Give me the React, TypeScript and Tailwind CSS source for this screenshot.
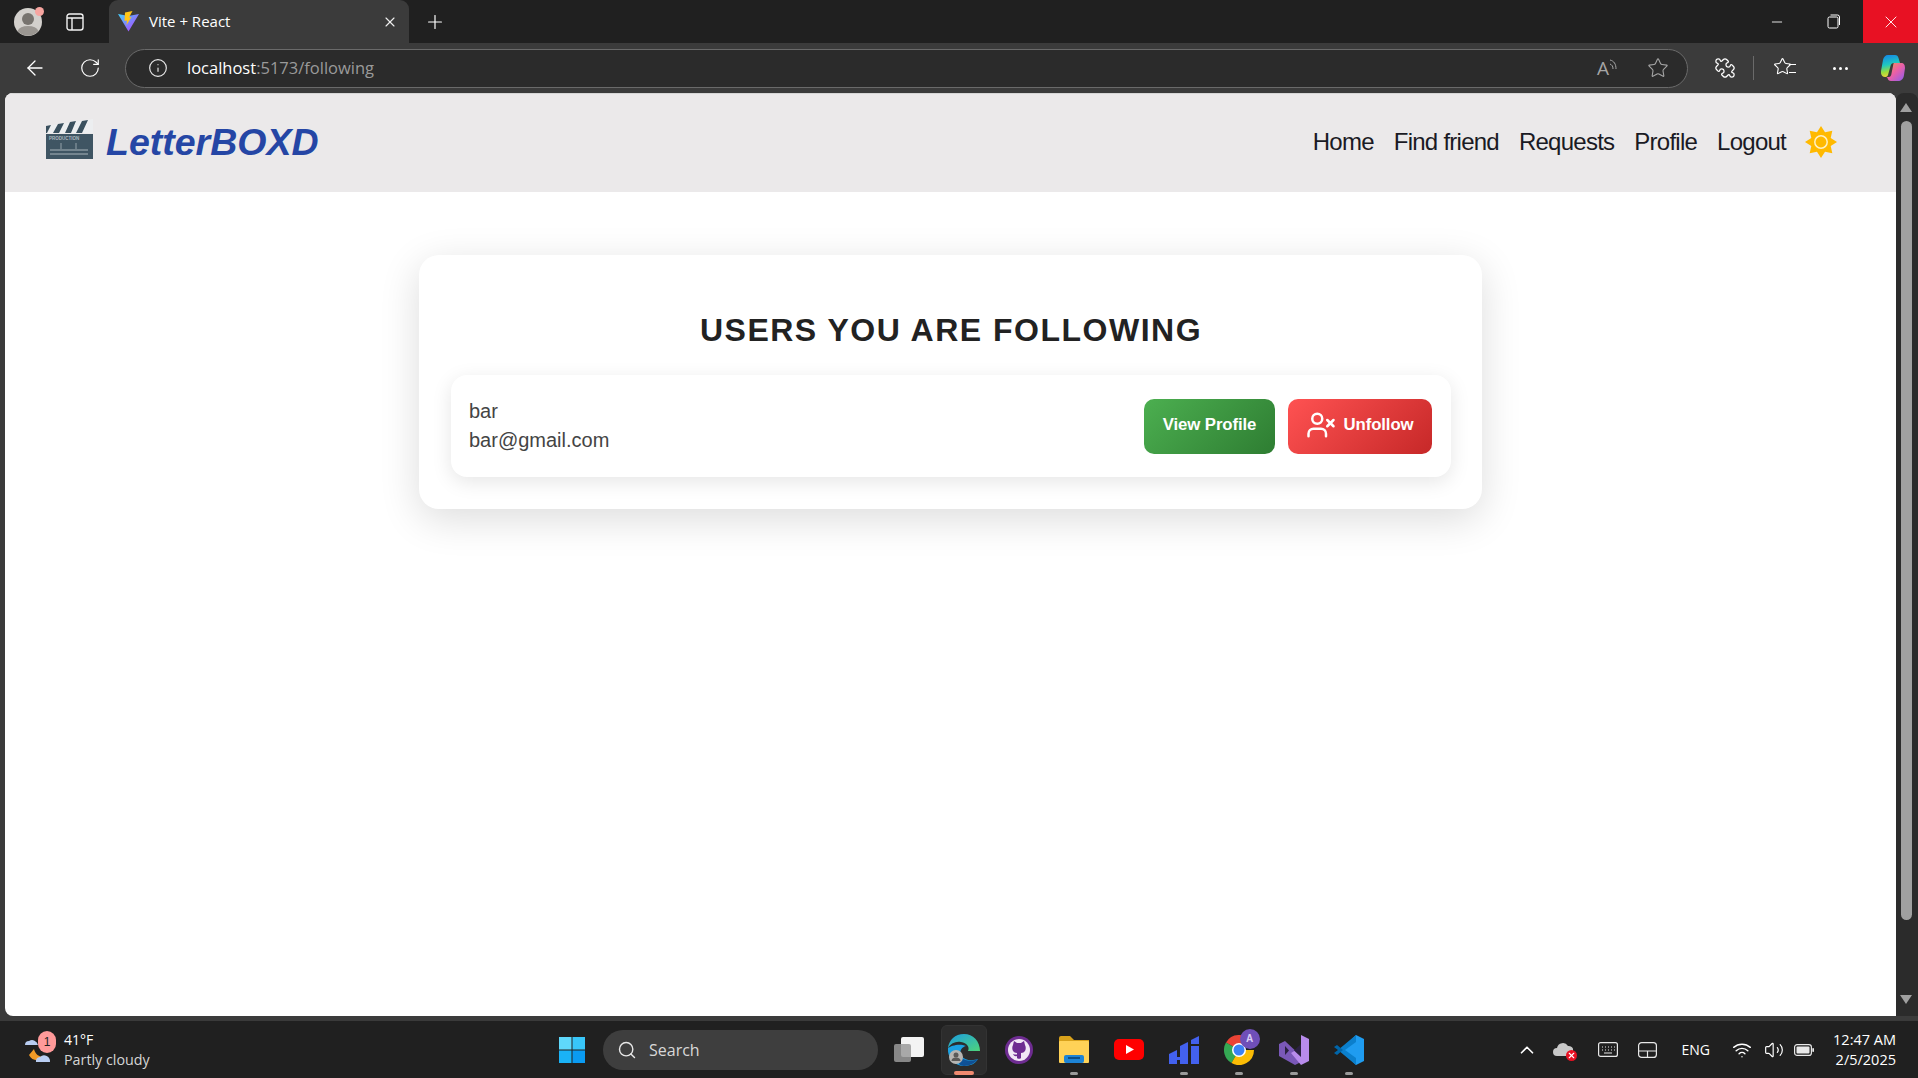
import React from 'react';
import {
  ArrowLeft,
  RotateCw,
  Info,
  Star,
  Puzzle,
  X,
  Plus,
  Minus,
  Search,
  ChevronUp,
  Wifi,
  Volume2,
  UserX,
} from 'lucide-react';

const sans = 'font-["Liberation_Sans",Arial,sans-serif]';

const Avatar: React.FC = () => (
  <svg width="28" height="28" viewBox="0 0 28 28">
    <circle cx="14" cy="14" r="14" fill="#d3d0cc" />
    <circle cx="14" cy="11" r="6" fill="#77736e" />
    <path d="M3.500 23a11 7 0 0 1 21 0a14 14 0 0 1-21 0z" fill="#9a9691" />
  </svg>
);

const ViteLogo: React.FC = () => (
  <svg width="21" height="21" viewBox="0 0 21 21">
    <defs>
      <linearGradient id="vite" x1="0" y1="0" x2="1" y2="1">
        <stop offset="0" stopColor="#41d1ff" />
        <stop offset="1" stopColor="#bd34fe" />
      </linearGradient>
    </defs>
    <path d="M0 3l10.500 17.500L21 3 10.500 5z" fill="url(#vite)" />
    <path d="M14.500 0L7 1.500 6.500 10l2.500-.5-.5 4.500 5-8-2.500.5z" fill="#ffc517" />
  </svg>
);

const Clapper: React.FC = () => (
  <svg width="48" height="40" viewBox="0 0 48 40">
    <path d="M1 7L48 0v14H1z" fill="#eceef0" />
    <path d="M1 7l5-1-4 8H1zM13 5l6-1-5 10H8zM25 3l6-1-5 12h-6zM37 2l6-1-6 13h-6z" fill="#3a505e" />
    <rect x="1" y="15" width="47" height="25" fill="#3f5563" />
    <text x="4" y="21" fontSize="4.500" fontWeight="700" fill="#aeb9c0" fontFamily="Liberation Sans, sans-serif">PRODUCTION</text>
    <path d="M16 24v6M31 24v6" stroke="#a9b5bc" strokeWidth="0.800" />
    <path d="M5 31h38M5 35h38" stroke="#a9b5bc" strokeWidth="1.100" />
  </svg>
);

const sunPoints = Array.from({ length: 16 }, (_, i) => {
  const r = i % 2 === 0 ? 16 : 10.5;
  const a = (i * Math.PI) / 8 - Math.PI / 2;
  return `${(16 + r * Math.cos(a)).toFixed(2)},${(16 + r * Math.sin(a)).toFixed(2)}`;
}).join(' ');

const Sun: React.FC = () => (
  <svg width="32" height="32" viewBox="0 0 32 32" className="-ml-[1px]">
    <polygon points={sunPoints} fill="#ffb900" />
    <circle cx="16" cy="16" r="6.200" fill="#ffb900" stroke="#fff1c4" strokeWidth="1.500" />
  </svg>
);

const Copilot: React.FC = () => (
  <svg width="24" height="26" viewBox="0 0 24 26">
    <defs>
      <linearGradient id="cpa" x1="0.200" y1="0" x2="0.400" y2="1">
        <stop offset="0" stopColor="#1487e8" />
        <stop offset="0.45" stopColor="#1fc8c0" />
        <stop offset="0.75" stopColor="#9bdc3c" />
        <stop offset="1" stopColor="#f4cf3a" />
      </linearGradient>
      <linearGradient id="cpb" x1="0" y1="0" x2="1" y2="1">
        <stop offset="0" stopColor="#f59a4a" />
        <stop offset="0.5" stopColor="#ea5fa8" />
        <stop offset="1" stopColor="#8a5cf0" />
      </linearGradient>
    </defs>
    <path d="M7 0h7c2 0 3 1 3.500 3L19 8h-6c-2 0-3 1-3.500 3L7 20c-.5 1.500-1.500 2-3 2-3 0-4.500-3-4-6L2 5c.5-3 2.500-5 5-5z" fill="url(#cpa)" />
    <path d="M13 8h7c3 0 4 2 4 5l-1 7c-.5 4-3 6-6 6h-7c-2 0-3-1-3.500-3L5.500 22H8c1 0 2-1 2.300-2.500L12 11c.2-1.500.5-3 1-3z" fill="url(#cpb)" />
  </svg>
);

const Clover: React.FC = () => (
  <svg width="26" height="26" viewBox="0 0 26 26">
    <rect x="0" y="0" width="12.500" height="12.500" fill="#5fd8fb" />
    <rect x="13.500" y="0" width="12.500" height="12.500" fill="#38c6f9" />
    <rect x="0" y="13.500" width="12.500" height="12.500" fill="#1ab2f6" />
    <rect x="13.500" y="13.500" width="12.500" height="12.500" fill="#0a9bf2" />
  </svg>
);

const TaskView: React.FC = () => (
  <svg width="32" height="30" viewBox="0 0 32 30">
    <rect x="8" y="2" width="23" height="20" rx="2" fill="#f3f3f3" />
    <rect x="1" y="9" width="17" height="18" rx="2" fill="#9a9a9a" fillOpacity="0.85" />
  </svg>
);

const Edge: React.FC = () => (
  <svg width="32" height="32" viewBox="0 0 32 32">
    <defs>
      <linearGradient id="edgeb" x1="0" y1="0" x2="1" y2="1">
        <stop offset="0" stopColor="#0c59a4" />
        <stop offset="1" stopColor="#114a8b" />
      </linearGradient>
      <linearGradient id="edgeg" x1="0" y1="0" x2="1" y2="1">
        <stop offset="0" stopColor="#1b9de2" />
        <stop offset="1" stopColor="#4ed47a" />
      </linearGradient>
    </defs>
    <path d="M16 0C7 0 1 6 0 14c3-5 8-7 13-6 6 1 9 5 7 9h12C32 7 25 0 16 0z" fill="url(#edgeg)" />
    <path d="M0 14c-1 9 6 18 16 18 6 0 11-2 14-7-5 2-14 2-17-4-2-4 1-8 5-9-7-3-15 0-18 2z" fill="#1ba1e2" />
    <path d="M12 21c2 6 11 7 18 4-3 4-8 7-14 7-2 0-4-1-5-2z" fill="url(#edgeb)" />
    <circle cx="8" cy="23" r="7" fill="#b7b5b2" />
    <circle cx="8" cy="21" r="2.500" fill="#5c5a58" />
    <path d="M3.500 27a4.500 3.500 0 0 1 9 0z" fill="#5c5a58" />
  </svg>
);

const GitHub: React.FC = () => (
  <svg width="28" height="28" viewBox="0 0 28 28">
    <circle cx="14" cy="14" r="14" fill="#6e2c91" />
    <circle cx="14" cy="14" r="11" fill="#f1e7f5" />
    <path d="M9 5l3 2h4l3-2 1 4c1 2 1 4 0 6-1 1-2 2-4 2v5c0 1-4 1-4 0v-2c-2 .5-3 0-4-2 1 .5 2 .5 4 .5V17c-2 0-3-1-4-2-1-2-1-4 0-6z" fill="#6e2c91" />
  </svg>
);

const Folder: React.FC = () => (
  <svg width="30" height="27" viewBox="0 0 30 27">
    <path d="M0 2a2 2 0 0 1 2-2h9l4 4h15v6H0z" fill="#d9a21b" />
    <rect x="0" y="5" width="30" height="22" rx="1" fill="#ffd257" />
    <rect x="5" y="19" width="20" height="8" rx="2" fill="#1d84d6" />
    <rect x="9" y="21" width="12" height="2" fill="#0b4f8a" />
  </svg>
);

const YouTube: React.FC = () => (
  <svg width="30" height="21" viewBox="0 0 30 21">
    <rect width="30" height="21" rx="5" fill="#ff0000" />
    <path d="M12 6l8 4.500-8 4.500z" fill="#fff" />
  </svg>
);

const Bars: React.FC = () => (
  <svg width="30" height="28" viewBox="0 0 30 28">
    <path d="M0 18l8-4v14H0zM8 21h3v3H8zM11 10l8-4v22h-8zM22 4l8-4v8h-8zM22 10h8v18h-8z" fill="#4361ee" />
  </svg>
);

const Chrome: React.FC = () => (
  <div className="relative w-[30px] h-[30px]">
    <svg width="30" height="30" viewBox="0 0 30 30">
      <path d="M15 15L2 7.500A15 15 0 0 1 28 7.500z" fill="#ea4335" />
      <path d="M15 15l-7.500 13A15 15 0 0 1 2 7.500z" fill="#34a853" />
      <path d="M15 15h15A15 15 0 0 1 7.500 28z" fill="#fbbc05" />
      <circle cx="15" cy="15" r="7" fill="#fff" />
      <circle cx="15" cy="15" r="5.500" fill="#3b82f6" />
    </svg>
    <div className={`absolute -top-[6px] -right-[6px] w-[20px] h-[20px] rounded-full bg-[#6f4fb8] flex items-center justify-center text-[10px] font-bold text-[#d9cdf5] ${sans}`}>
      A
    </div>
  </div>
);

const VisualStudio: React.FC = () => (
  <svg width="30" height="30" viewBox="0 0 30 30">
    <path d="M0 9l6-3 16 15 0 6-6 3L0 21z" fill="#7a58b8" />
    <path d="M22 0l8 4v22l-8 4-10-12 10-6z" fill="#b88bec" />
    <path d="M6 11v9l4-4.500z" fill="#2a2140" />
    <path d="M22 9v13l-7-6.500z" fill="#2a2140" />
  </svg>
);

const VSCode: React.FC = () => (
  <svg width="30" height="30" viewBox="0 0 30 30">
    <path d="M22 0l8 4v22l-8 4L6 15z" fill="#1f9cf0" />
    <path d="M22 0L4 15l18 15v-7L11 15 22 7z" fill="#0b7fcc" />
    <path d="M3 10l-3 2 4 3-4 3 3 2 6-5z" fill="#0065a9" />
  </svg>
);

const Weather: React.FC = () => (
  <div className="relative w-[32px] h-[34px]">
    <svg width="32" height="34" viewBox="0 0 32 34">
      <path d="M5 22c3 6 10 7 15 2-5 0-9-3-10-8z" fill="#f19a26" />
      <path d="M1 12a4 4 0 0 1 4-4 6 6 0 0 1 9 4z" fill="#b9cdf2" />
      <path d="M12 29a4 4 0 0 1 4-5 6 6 0 0 1 10 5z" fill="#b9cdf2" />
    </svg>
    <div className={`absolute -top-[2px] left-[14px] w-[18px] h-[22px] rounded-full bg-[#ff9a9a] flex items-center justify-center text-[12px] text-[#222] ${sans}`}>
      1
    </div>
  </div>
);

const TaskItem: React.FC<{ dot?: boolean; children: React.ReactNode }> = ({ dot, children }) => (
  <div className="relative w-[55px] h-[50px] flex items-center justify-center">
    {children}
    {dot && <span className="absolute bottom-0 left-1/2 -translate-x-1/2 w-[8px] h-[3px] rounded-full bg-[#9a9a9a]" />}
  </div>
);

const NavLink: React.FC<{ label: string }> = ({ label }) => (
  <a className="text-[24px] tracking-[-0.75px] text-[#1a1a24]">{label}</a>
);

export default function App() {
  return (
    <div className={`w-[1918px] h-[1078px] overflow-hidden flex flex-col bg-[#3b3b3b] ${sans}`}>
      {/* tab strip */}
      <div className="h-[43px] bg-[#202020] flex items-center font-['Open_Sans',sans-serif] text-white">
        <div className="w-[56px] pl-[14px] flex items-center relative">
          <Avatar />
          <span className="absolute left-[35px] -top-[1px] w-[9px] h-[9px] rounded-full bg-[#f7a5a0]" />
        </div>
        <div className="w-[53px] pl-[10px]">
          <svg width="18" height="18" viewBox="0 0 18 18" fill="none" stroke="#f2f2f2" strokeWidth="1.400">
            <rect x="1" y="1" width="16" height="16" rx="2.500" />
            <path d="M1 5h16M6 5v12" />
          </svg>
        </div>
        <div className="w-[300px] h-full bg-[#3b3b3b] rounded-t-[9px] flex items-center pl-[9px] pr-[11px]">
          <ViteLogo />
          <span className="ml-[10px] text-[15px] leading-none">Vite + React</span>
          <X size={16} strokeWidth={1.700} className="ml-auto text-[#f0f0f0]" />
        </div>
        <Plus size={22} strokeWidth={1.300} className="ml-[15px]" />
        <div className="ml-auto flex items-center h-full">
          <Minus size={16} strokeWidth={1.300} className="mr-[42px]" />
          <svg width="14" height="15" viewBox="0 0 14 15" fill="none" stroke="#fff" strokeWidth="1" className="mr-[22px]">
            <rect x="1" y="3" width="10" height="11" rx="1.500" />
            <path d="M3.500 1h7a2 2 0 0 1 2 2v8" />
          </svg>
          <div className="w-[55px] h-full bg-[#e81123] flex items-center justify-center">
            <X size={20} strokeWidth={1.100} />
          </div>
        </div>
      </div>

      {/* address bar */}
      <div className="h-[50px] flex items-center font-['Open_Sans',sans-serif] text-white">
        <ArrowLeft size={24} strokeWidth={1.300} className="ml-[23px]" />
        <RotateCw size={22} strokeWidth={1.300} className="ml-[32px]" />
        <div className="ml-[24px] w-[1563px] h-[39px] rounded-full bg-[#2b2b2b] border border-[#6a6a6a] flex items-center pl-[22px] pr-[18px]">
          <Info size={20} strokeWidth={1.400} className="text-[#e8e8e8]" />
          <span className="ml-[19px] text-[16.500px]">
            localhost<span className="text-[#9a9a9a]">:5173/following</span>
          </span>
          <div className="ml-auto flex items-center gap-[28px] text-[#a5a5a5]">
            <div className="flex items-start text-[19px] leading-none">
              A
              <svg width="10" height="14" viewBox="0 0 10 14" fill="none" stroke="#a5a5a5" strokeWidth="1">
                <path d="M1 1c4 1 6 4 6 9M1 5c2 1 3 2 3 5" />
              </svg>
            </div>
            <Star size={22} strokeWidth={1.200} />
          </div>
        </div>
        <Puzzle size={22} strokeWidth={1.400} className="ml-[26px] -scale-x-100" />
        <span className="ml-[17px] w-px h-[24px] bg-[#6a6a6a]" />
        <div className="relative ml-[19px] w-[22px] h-[22px]">
          <Star size={19} strokeWidth={1.400} />
          <span className="absolute -right-[1px] top-[7px] w-[7px] h-[9px] border-y border-white" />
        </div>
        <div className="ml-[38px] flex items-center gap-[3px]">
          <span className="w-[3px] h-[3px] rounded-full bg-white" />
          <span className="w-[3px] h-[3px] rounded-full bg-white" />
          <span className="w-[3px] h-[3px] rounded-full bg-white" />
        </div>
        <span className="ml-[33px]"><Copilot /></span>
      </div>

      {/* page and scrollbar */}
      <div className="h-[923px] flex pl-[5px]">
        <div className="w-[1891px] bg-white rounded-t-[8px] rounded-bl-[8px] overflow-hidden flex flex-col">
          <nav className="h-[99px] bg-[#ebe9ea] flex items-center pl-[40px] pr-[59px] border-t border-[#d6d6d6]">
            <span className="mb-[8px]"><Clapper /></span>
            <span className="ml-[13px] mb-[2px] text-[37.500px] font-bold italic text-[#2546a5]">LetterBOXD</span>
            <div className="ml-auto mb-[2px] flex items-center gap-[20px]">
              <NavLink label="Home" />
              <NavLink label="Find friend" />
              <NavLink label="Requests" />
              <NavLink label="Profile" />
              <NavLink label="Logout" />
              <Sun />
            </div>
          </nav>

          <main className="flex-1 pt-[63px]">
            <section className="mx-auto w-[1063px] rounded-[20px] bg-white pl-[32px] pr-[31px] pt-[48px] pb-[32px] shadow-[0_10px_40px_rgba(0,0,0,0.14)]">
              <h2 className="h-[54px] flex items-center justify-center text-[32px] font-bold tracking-[1.5px] text-[#222] mb-[18px]">
                USERS YOU ARE FOLLOWING
              </h2>
              <div className="h-[102px] rounded-[16px] bg-white pl-[18px] pr-[19px] flex items-center justify-between shadow-[0_5px_20px_rgba(0,0,0,0.1)]">
                <div className="text-[20px] leading-[29.440px] text-[#444]">
                  <p>bar</p>
                  <p>bar@gmail.com</p>
                </div>
                <div className="flex items-center gap-[13px]">
                  <button className="w-[131px] h-[55px] pb-[2px] rounded-[10px] bg-[linear-gradient(135deg,#4caf50,#2e7d32)] text-white text-[16.800px] font-bold tracking-[-0.1px]">
                    View Profile
                  </button>
                  <button className="w-[144px] h-[55px] pb-[2px] rounded-[10px] bg-[linear-gradient(135deg,#ff5252,#c62828)] text-white text-[16.800px] font-bold tracking-[-0.1px] flex items-center justify-center gap-[7px]">
                    <UserX size={30} strokeWidth={2} />
                    Unfollow
                  </button>
                </div>
              </div>
            </section>
          </main>
        </div>

        <div className="w-[22px] h-full bg-[#2b2b2b] rounded-t-[8px] flex flex-col items-center pr-[2px]">
          <span className="mt-[10px] w-0 h-0 border-x-[6px] border-x-transparent border-b-[9px] border-b-[#a0a0a0]" />
          <span className="mt-[9px] w-[11px] h-[799px] rounded-full bg-[#a0a0a0]" />
          <span className="mt-[75px] w-0 h-0 border-x-[6px] border-x-transparent border-t-[9px] border-t-[#a0a0a0]" />
        </div>
      </div>

      {/* taskbar */}
      <div className="mt-[4px] h-[58px] bg-[#202020] border-t border-[#3a3a3a] flex items-center font-['Open_Sans',sans-serif] text-white relative">
        <div className="w-[559px] pl-[24px] flex items-center">
          <Weather />
          <div className="ml-[8px] leading-[20px]">
            <p className="text-[14px]">41°F</p>
            <p className="text-[14.300px] text-[#d5d5d5]">Partly cloudy</p>
          </div>
        </div>
        <Clover />
        <div className="ml-[18px] w-[275px] h-[40px] rounded-full bg-[#3e3e3e] flex items-center pl-[14px]">
          <Search size={20} strokeWidth={1.700} className="text-[#e8e8e8]" />
          <span className="ml-[12px] text-[16px] text-[#d8d8d8]">Search</span>
        </div>
        <div className="ml-[3px] flex items-center">
          <TaskItem><TaskView /></TaskItem>
          <TaskItem>
            <div className="absolute inset-y-0 left-[5px] w-[46px] rounded-[6px] bg-[#2c2c2c] border border-[#333]" />
            <div className="relative"><Edge /></div>
            <span className="absolute bottom-0 left-1/2 -translate-x-1/2 w-[20px] h-[4px] rounded-full bg-[#f08a70]" />
          </TaskItem>
          <TaskItem><GitHub /></TaskItem>
          <TaskItem dot><Folder /></TaskItem>
          <TaskItem><YouTube /></TaskItem>
          <TaskItem dot><Bars /></TaskItem>
          <TaskItem dot><Chrome /></TaskItem>
          <TaskItem dot><VisualStudio /></TaskItem>
          <TaskItem dot><VSCode /></TaskItem>
        </div>

        <div className="ml-auto pr-[22px] flex items-center">
          <ChevronUp size={22} strokeWidth={1.800} className="mr-[15px]" />
          <div className="relative w-[22px] h-[16px] mr-[23px]">
            <svg width="20" height="14" viewBox="0 0 20 14"><path d="M4 14a4 4 0 0 1 0-8 6 6 0 0 1 11-2 5 5 0 0 1 1 10z" fill="#c8c8c8" /></svg>
            <span className="absolute -right-[2px] -bottom-[3px] w-[11px] h-[11px] rounded-full bg-[#e81123] flex items-center justify-center">
              <X size={9} strokeWidth={3} />
            </span>
          </div>
          <svg width="20" height="15" viewBox="0 0 20 15" fill="none" stroke="#e8e8e8" strokeWidth="1.200" className="mr-[20px]">
            <rect x="0.600" y="0.600" width="18.800" height="13.800" rx="2" />
            <path d="M4 5h1M7 5h1M10 5h1M13 5h1M16 5h1M4 8h1M7 8h1M10 8h1M13 8h1M16 8h1M6 11h8" />
          </svg>
          <svg width="19" height="16" viewBox="0 0 19 16" fill="none" stroke="#e8e8e8" strokeWidth="1.200" className="mr-[25px]">
            <rect x="0.600" y="0.600" width="17.800" height="14.800" rx="3" />
            <path d="M1 9h17M9.500 9v6" />
          </svg>
          <span className="text-[14px] mr-[22px]">ENG</span>
          <Wifi size={20} strokeWidth={1.700} className="mr-[12px]" />
          <Volume2 size={20} strokeWidth={1.400} className="mr-[10px]" />
          <svg width="20" height="12" viewBox="0 0 20 12" className="mr-[19px]">
            <rect x="0.600" y="0.600" width="16.800" height="10.800" rx="2.500" fill="none" stroke="#e8e8e8" strokeWidth="1.200" />
            <rect x="2.500" y="2.500" width="13" height="7" rx="1" fill="#e8e8e8" />
            <rect x="18.300" y="4" width="1.700" height="4" rx="0.800" fill="#e8e8e8" />
          </svg>
          <div className="text-right text-[14.500px] leading-[20px]">
            <p>12:47 AM</p>
            <p>2/5/2025</p>
          </div>
        </div>
      </div>
    </div>
  );
}
